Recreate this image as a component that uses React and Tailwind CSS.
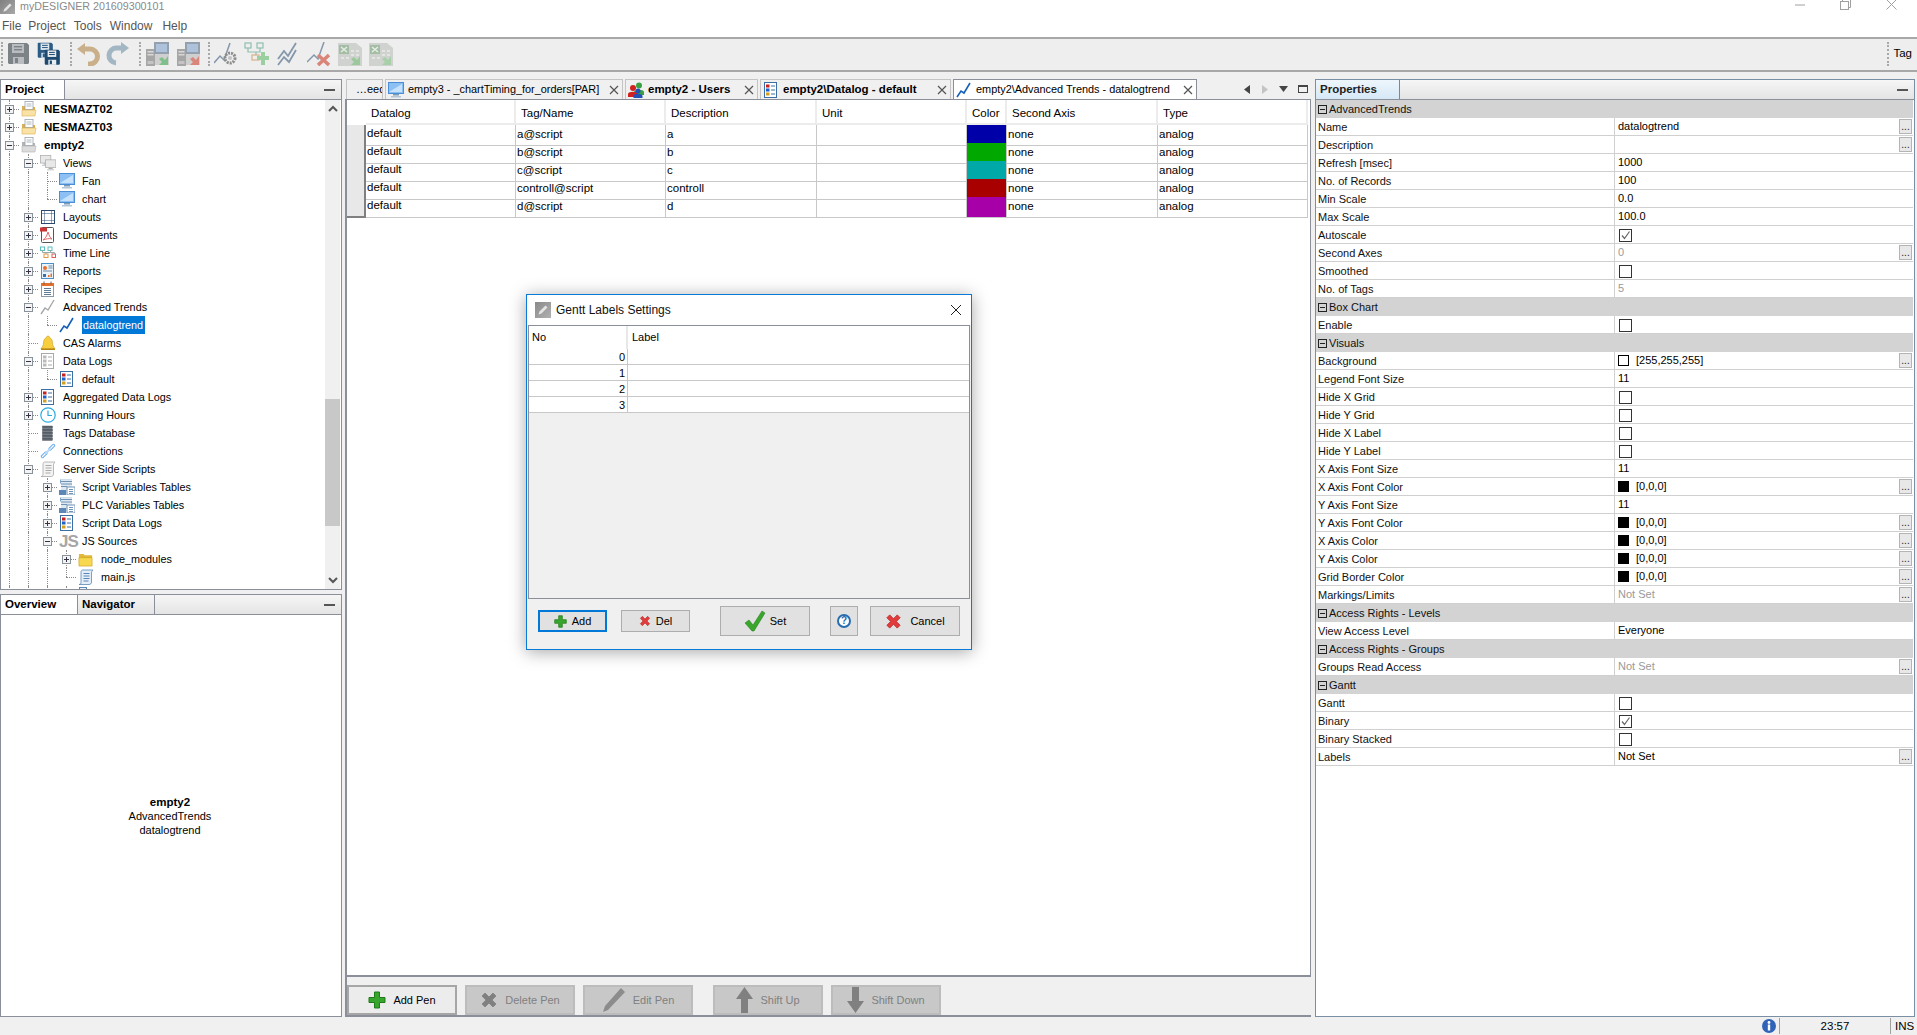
import React from "react";

const F = "font-['Liberation_Sans','Arial',sans-serif]";

/* ---------- toolbar icons ---------- */
const Floppy = ({ c = "#7d8287", l = "#b9bcc0", x = 0, y = 0, s = 1 }) => (
  <g transform={`translate(${x} ${y}) scale(${s})`}>
    <path d="M2 1h18l2 2v18l-1 1H2l-1-1V2z" fill={c} />
    <rect x="5" y="2" width="12" height="9" fill={l} />
    <rect x="7" y="4" width="8" height="1.4" fill={c} />
    <rect x="7" y="7" width="8" height="1.4" fill={c} />
    <rect x="6" y="15" width="11" height="7" fill={l} />
    <rect x="8" y="16" width="3" height="5" fill={c} />
  </g>
);
const IconSave = () => (
  <svg width="24" height="24" viewBox="0 0 24 24"><Floppy /></svg>
);
const IconSaveAll = () => (
  <svg width="24" height="24" viewBox="0 0 24 24">
    <Floppy c="#2b5c86" l="#dfe6ec" s={0.72} x={0} y={0} />
    <Floppy c="#1e4a70" l="#e8edf1" s={0.72} x={7} y={7} />
  </svg>
);
const IconUndo = () => (
  <svg width="24" height="24" viewBox="0 0 24 24">
    <path d="M7 7h7a6.5 6.5 0 0 1 0 15h-2" fill="none" stroke="#c9b08a" strokeWidth="5" />
    <path d="M9 1v12L1 7z" fill="#c9b08a" />
  </svg>
);
const IconRedo = () => (
  <svg width="24" height="24" viewBox="0 0 24 24">
    <path d="M17 6h-6a6.5 6.5 0 0 0-1 15" fill="none" stroke="#a3b6c4" strokeWidth="5" />
    <path d="M15 0v12l8-6z" fill="#a3b6c4" />
  </svg>
);
const IconServer = ({ arrow = "#7fc08a" }) => (
  <svg width="24" height="24" viewBox="0 0 24 24">
    <rect x="0" y="7" width="9" height="17" fill="#a6a6a6" />
    <rect x="1.5" y="9" width="6" height="1.5" fill="#d8d8d8" />
    <rect x="1.5" y="12" width="6" height="1.5" fill="#d8d8d8" />
    <rect x="1.5" y="19" width="6" height="3" fill="#c4c4c4" />
    <rect x="8" y="0" width="15" height="12" fill="#93a0ae" />
    <rect x="10" y="2" width="11" height="8" fill="#aec2dc" />
    <rect x="9" y="12" width="14" height="11" fill="#cfcfcf" />
    <path d="M22 14v9H13l3-3-3-3 3-2 3 3z" fill={arrow} />
  </svg>
);
const IconTrendGear = () => (
  <svg width="24" height="24" viewBox="0 0 24 24">
    <path d="M0 21l6-7 4 4 6-17" fill="none" stroke="#8497ab" strokeWidth="1.5" />
    <circle cx="16" cy="16" r="5" fill="none" stroke="#8c8c8c" strokeWidth="3" strokeDasharray="2 1" />
    <circle cx="16" cy="16" r="2" fill="#c2c2c2" />
  </svg>
);
const IconTreePlus = () => (
  <svg width="25" height="24" viewBox="0 0 25 24">
    <g fill="none" stroke="#8fbfb0" strokeWidth="1.2">
      <rect x="1" y="1" width="6" height="5" />
      <rect x="13" y="1" width="6" height="5" />
      <path d="M4 6v4h8M16 6v4h-4v3" />
    </g>
    <rect x="8" y="13" width="7" height="5" fill="none" stroke="#d6b18a" strokeWidth="1.2" />
    <path d="M17 10h4v4h4v4h-4v5h-4v-5h-4v-4h4z" fill="#9ccf9f" />
  </svg>
);
const IconTrends = () => (
  <svg width="24" height="24" viewBox="0 0 24 24" fill="none" stroke="#8497ab" strokeWidth="1.8">
    <path d="M2 17l6-8 4 5 8-13" />
    <path d="M2 23l6-8 5 5 7-12" />
  </svg>
);
const IconTrendX = () => (
  <svg width="24" height="24" viewBox="0 0 24 24">
    <path d="M0 20l7-7 4 4 6-17" fill="none" stroke="#8497ab" strokeWidth="1.5" />
    <path d="M11 13l11 10M22 13L11 23" stroke="#d9857a" strokeWidth="3.6" />
  </svg>
);
const IconExcel = ({ a = "#9cc99c" }) => (
  <svg width="24" height="24" viewBox="0 0 24 24">
    <path d="M0 1h18l6 5v18H0z" fill="#cfd2cf" />
    <rect x="1" y="3" width="10" height="9" fill="#a5bca5" />
    <path d="M3 5l6 5M9 5l-6 5" stroke="#e6efe6" strokeWidth="1.4" />
    <g fill="#e3e5e3">
      <rect x="13" y="8" width="3" height="2" /><rect x="18" y="8" width="3" height="2" />
      <rect x="13" y="12" width="3" height="2" /><rect x="18" y="12" width="3" height="2" />
      <rect x="3" y="15" width="3" height="2" /><rect x="8" y="15" width="3" height="2" />
    </g>
    <path d="M22 14v9h-9l3-3-3-3 3-2 3 3z" fill={a} />
  </svg>
);
const Grip = () => (
  <div className="w-[2px] h-[24px] border-l-2 border-dotted border-[#a8a8a8]" />
);

/* ---------- tree icons (16 box) ---------- */
const I = ({ children, w = 16, h = 16 }) => (
  <svg width={w} height={h} viewBox="0 0 16 16">{children}</svg>
);
const FolderDoc = ({ gray }) => {
  const a = gray ? "#dcdcdc" : "#f8e2a6";
  const b = gray ? "#b4b4b4" : "#dcb050";
  return (
    <I>
      <path d="M1 5h4l1 1h8v9H1z" fill={b} />
      <rect x="4" y="0.5" width="8" height="8" fill="#fff" stroke="#9aa4ae" strokeWidth="0.8" />
      <path d="M5.5 3h5M5.5 5h5" stroke="#9aa4ae" strokeWidth="0.8" />
      <path d="M1 9h14l-1 6H1z" fill={a} stroke={b} strokeWidth="0.6" />
    </I>
  );
};
const Mon = ({ x = 0, y = 0, s = 1, gray }) => (
  <g transform={`translate(${x} ${y}) scale(${s})`}>
    <rect x="0.5" y="0.5" width="15" height="11" fill={gray ? "#e8e8e8" : "#8cc0f4"} stroke={gray ? "#a8a8a8" : "#4a8fd6"} />
    {!gray && <path d="M1 10l13-8v8z" fill="#c6e1fb" />}
    <rect x="5" y="12" width="6" height="1.5" fill={gray ? "#a8a8a8" : "#7d9ab5"} />
    <rect x="3" y="14" width="10" height="1.5" fill={gray ? "#c4c4c4" : "#b4c6d6"} />
  </g>
);
const Monitors = () => (
  <I>
    <Mon gray s={0.7} x={0} y={0} />
    <Mon gray s={0.7} x={5} y={4.5} />
  </I>
);
const Layouts = () => (
  <I>
    <rect x="1.5" y="1.5" width="13" height="13" fill="#fff" stroke="#2c4a6e" />
    <path d="M1.5 4.5h13M1.5 11.5h13M4.5 1.5v13M11.5 1.5v13" stroke="#2c4a6e" strokeDasharray="1 1" fill="none" />
  </I>
);
const Pdf = () => (
  <I>
    <rect x="1.5" y="0.5" width="12" height="15" rx="1" fill="#fff" stroke="#555" />
    <rect x="0" y="0.5" width="7" height="4" fill="#c33" />
    <path d="M8 5c-1 4-3 7-5 8 3-1 6-2 9-1-2-1-3-4-4-7z" fill="none" stroke="#e26a6a" />
  </I>
);
const TimeLine = () => (
  <I>
    <g fill="none" strokeWidth="1">
      <rect x="0.5" y="2" width="4" height="3.5" stroke="#5cc0c0" />
      <rect x="8" y="2" width="4" height="3.5" stroke="#5cc0c0" />
      <rect x="4" y="9" width="4" height="3.5" stroke="#e59a4a" />
      <rect x="12" y="9" width="3.5" height="3.5" stroke="#e05a5a" />
      <path d="M2.5 5.5v2h8v-2M6 7.5v1.5M10.500 7.500h4v1.500" stroke="#9aa" />
    </g>
  </I>
);
const Reports = () => (
  <I>
    <rect x="1.500" y="0.500" width="12" height="15" fill="#e8f3fb" stroke="#4a90c8" />
    <circle cx="5" cy="5" r="2" fill="#e8702a" />
    <path d="M8.500 3h4M8.500 5h4M3 8h9" stroke="#6a8aa5" />
    <rect x="3" y="11" width="3" height="3" fill="#3a6fb0" />
    <path d="M8 14v-2h1.500v2zM10.500 14v-3.500H12V14z" fill="#e8702a" />
  </I>
);
const Recipes = () => (
  <I>
    <rect x="1.500" y="2.500" width="12" height="13" fill="#fff" stroke="#8a9aa8" />
    <rect x="1" y="2" width="13" height="3" fill="#e8702a" />
    <path d="M4 0.500v3M11 0.500v3" stroke="#666" />
    <path d="M4 7.500h7M4 9.500h7M4 11.500h7M4 13.500h7" stroke="#5f7a94" />
  </I>
);
const TrendGray = () => (
  <I><path d="M1 15l4-6 3 2 6-10" fill="none" stroke="#a8a8a8" strokeWidth="1.4" /></I>
);
const TrendBlue = () => (
  <I><path d="M1 15l4-6 3 2 6-10" fill="none" stroke="#1560bd" strokeWidth="1.6" /></I>
);
const Bell = () => (
  <I>
    <path d="M8 1a1.500 1.500 0 0 1 1.500 1.500C12 3.500 12.500 6 12.500 8c0 2 1 4 2.500 5.500H1C2.500 12 3.500 10 3.500 8c0-2 .5-4.500 3-5.500A1.500 1.500 0 0 1 8 1z" fill="#f7cf3e" stroke="#c99a1e" strokeWidth="0.6" />
    <rect x="1" y="13.500" width="14" height="1.500" fill="#b8860b" />
  </I>
);
const ListIcon = ({ gray }) => {
  const s = gray ? "#a8a8a8" : "#3b6ea5";
  const cs = gray ? ["#bbb", "#bbb", "#bbb"] : ["#c82020", "#2060c8", "#d0a020"];
  return (
    <I>
      <rect x="1.500" y="0.500" width="12" height="15" fill="#fff" stroke={s} />
      {cs.map((c, i) => (
        <g key={i}>
          <rect x="3" y={2.5 + i * 4} width="3.500" height="3" fill={c} />
          <path d={`M8 ${4 + i * 4}h4`} stroke={s} />
        </g>
      ))}
    </I>
  );
};
const Clock = () => (
  <I>
    <circle cx="8" cy="8" r="7.200" fill="#fff" stroke="#29abe2" strokeWidth="1.200" />
    <path d="M8 3.500V8.500h4" fill="none" stroke="#29abe2" strokeWidth="1.200" />
  </I>
);
const Db = () => (
  <I>
    {[1, 4, 7, 10, 13].map((y) => (
      <rect key={y} x="2.500" y={y} width="10" height="2.400" fill="#5c6670" stroke="#3c444c" strokeWidth="0.4" />
    ))}
  </I>
);
const LinkI = () => (
  <I>
    <g fill="none" strokeLinecap="round">
      <path d="M2.500 13.500l3.500-3.500" stroke="#6fb2f0" strokeWidth="3.400" />
      <path d="M10 6l3.500-3.500" stroke="#6fb2f0" strokeWidth="3.400" />
      <path d="M2.500 13.500l3.500-3.500M10 6l3.500-3.500" stroke="#fff" strokeWidth="1.200" />
      <path d="M6 10l4-4" stroke="#b8daf8" strokeWidth="2" />
    </g>
  </I>
);
const Script = ({ blue }) => {
  const s = blue ? "#5b86b5" : "#a8a8a8";
  return (
    <I>
      <path d="M4.500 1H15c-1 1-1.500 2-1.500 3v9c0 1.500-1 2.500-2.500 2.500H1c1.500 0 2-1 2-2V3c0-1 .5-2 1.500-2z" fill={blue ? "#e4eef8" : "#f4f4f4"} stroke={s} strokeWidth="0.800" />
      <path d="M5.500 4.500h6M5.500 7h6M5.500 9.500h6M5.500 12h5" stroke={s} />
    </I>
  );
};
const Table = () => (
  <I>
    <rect x="1" y="0.500" width="12" height="4" fill="#7ea4c8" />
    <path d="M2 0.500h11v14H2z" fill="#dfe8f1" />
    <path d="M2 2.500h11M2 5h11M2 7.500h6" stroke="#6f93b6" />
    <rect x="0" y="11" width="7" height="5" fill="#5b86b5" />
    <rect x="8" y="8" width="8" height="8" fill="#fff" stroke="#6f93b6" />
    <path d="M10 10.500h4M10 12.500h4M10 14.500h4" stroke="#6f93b6" />
  </I>
);
const Folder = () => (
  <I w={15} h={15}>
    <path d="M1 2h5l1 1.500h8V15H1z" fill="#e2b93b" />
    <path d="M1 6h14v9H1z" fill="#f7d84e" stroke="#c99a1e" strokeWidth="0.600" />
  </I>
);
const Js = () => (
  <span className="text-[17px] font-bold leading-none tracking-[-1px] text-[#a6a6a6]">JS</span>
);
const MonitorI = () => <I><Mon /></I>;
const PageTop = () => (
  <I><rect x="1.500" y="0.500" width="7" height="15" fill="#eaf2fa" stroke="#5b86b5" /></I>
);

/* ---------- tree ---------- */
const Exp = ({ k }) => (
  <span className="absolute left-[5px] top-[5px] w-[9px] h-[9px] border border-[#8a9299] bg-[#f4f4f4] flex items-center justify-center z-10">
    <span className="relative block w-[5px] h-px bg-[#334]">
      {k === "p" && <span className="absolute left-[2px] top-[-2px] w-px h-[5px] bg-[#334]" />}
    </span>
  </span>
);

const tree = [
  [0, "p", <FolderDoc />, "NESMAZT02", { b: 1 }],
  [0, "p", <FolderDoc />, "NESMAZT03", { b: 1 }],
  [0, "m", <FolderDoc gray />, "empty2", { b: 1 }],
  [1, "m", <Monitors />, "Views"],
  [2, "", <MonitorI />, "Fan"],
  [2, "", <MonitorI />, "chart", { last: 1 }],
  [1, "p", <Layouts />, "Layouts"],
  [1, "p", <Pdf />, "Documents"],
  [1, "p", <TimeLine />, "Time Line"],
  [1, "p", <Reports />, "Reports"],
  [1, "p", <Recipes />, "Recipes"],
  [1, "m", <TrendGray />, "Advanced Trends"],
  [2, "", <TrendBlue />, "datalogtrend", { last: 1, sel: 1 }],
  [1, "", <Bell />, "CAS Alarms"],
  [1, "m", <ListIcon gray />, "Data Logs"],
  [2, "", <ListIcon />, "default", { last: 1 }],
  [1, "p", <ListIcon />, "Aggregated Data Logs"],
  [1, "p", <Clock />, "Running Hours"],
  [1, "", <Db />, "Tags Database"],
  [1, "", <LinkI />, "Connections"],
  [1, "m", <Script />, "Server Side Scripts"],
  [2, "p", <Table />, "Script Variables Tables"],
  [2, "p", <Table />, "PLC Variables Tables"],
  [2, "p", <ListIcon />, "Script Data Logs"],
  [2, "m", <Js />, "JS Sources"],
  [3, "p", <Folder />, "node_modules"],
  [3, "", <Script blue />, "main.js", { last: 1 }],
  [3, "", <PageTop />, ""],
];

const V = ({ half }) => (
  <span className={`absolute left-[9px] top-0 w-0 border-l border-dotted border-[#8a8a8a] ${half ? "h-[9px]" : "h-full"}`} />
);

const TreeRow = ({ r }) => {
  const [lv, ex, ic, label, o = {}] = r;
  return (
    <div className="flex h-[18px] items-stretch">
      {Array.from({ length: lv }).map((_, i) => (
        <div key={i} className="relative w-[19px] shrink-0"><V /></div>
      ))}
      <div className="relative w-[19px] shrink-0">
        <V half={o.last} />
        <span className="absolute left-[9px] top-[9px] w-[10px] h-0 border-t border-dotted border-[#8a8a8a]" />
        {ex && <Exp k={ex} />}
      </div>
      <div className="w-[24px] shrink-0 pl-[2px] flex items-center">{ic}</div>
      <div
        className={`pl-px pr-[2px] flex items-center whitespace-nowrap ${o.b ? "font-bold text-[11.5px] pt-px" : "text-[10.8px]"} ${
          o.sel ? "ml-px bg-[#0078d7] text-white" : "text-black"
        }`}
      >
        {label}
      </div>
    </div>
  );
};

const Dash = () => <div className="w-[11px] h-[2px] bg-[#555]" />;
const headGrad = "bg-gradient-to-b from-[#f6f6f6] to-[#e4e4e4]";

const Chevron = ({ up }) => (
  <svg width="10" height="8" viewBox="0 0 10 8">
    <path d={up ? "M1 6l4-4 4 4" : "M1 2l4 4 4-4"} fill="none" stroke="#555" strokeWidth="2" />
  </svg>
);

/* ---------- center ---------- */
const X = () => (
  <svg width="10" height="10" viewBox="0 0 10 10"><path d="M1 1l8 8M9 1L1 9" stroke="#555" strokeWidth="1.200" /></svg>
);
const Users = () => (
  <I>
    <circle cx="11" cy="3.500" r="3" fill="#3aa040" />
    <path d="M6 10c0-3 10-3 10 0v3H6z" fill="#3aa040" />
    <circle cx="5" cy="6" r="3" fill="#d02020" />
    <path d="M0 12c0-3 10-3 10 0v3H0z" fill="#d02020" />
    <circle cx="10" cy="9" r="2.500" fill="#2050b8" />
    <path d="M5.500 14c0-3 9-3 9 0v2h-9z" fill="#2050b8" />
  </I>
);

const Tab = ({ w, icon, label, bold, active }) => (
  <div
    className={`shrink-0 h-[20px] flex items-center whitespace-nowrap border-x border-t ${
      active ? "bg-white border-[#8a8f99]" : "bg-[#f0f0f0] border-[#c4c4c4]"
    } ${w}`}
  >
    <div className="w-[22px] pl-[2px] shrink-0 flex items-center">{icon}</div>
    <div className={`flex-1 overflow-hidden ${bold ? "font-bold text-[11.5px]" : "text-[10.9px]"}`}>{label}</div>
    <div className="w-[13px] shrink-0 flex items-center"><X /></div>
  </div>
);

const headers = ["Datalog", "Tag/Name", "Description", "Unit", "Color", "Second Axis", "Type"];
const pens = [
  ["a@script", "a", "#0000a8"],
  ["b@script", "b", "#00a800"],
  ["c@script", "c", "#00a8a8"],
  ["controll@script", "controll", "#a80000"],
  ["d@script", "d", "#a800a8"],
];
const cols = "grid grid-cols-[19px_150px_150px_151px_150px_40px_151px_150px]";

const PenBtn = ({ w = "w-[110px]", icon, label, off, cls = "" }) => (
  <div
    className={`${w} h-[30px] shrink-0 flex items-center justify-center gap-[7px] text-[11px] border-2 ${
      off ? "bg-[#c8c8c8] border-[#bcbcbc] text-[#808080]" : "bg-[#ececec] border-[#a6a6a6] text-black"
    } ${cls}`}
  >
    {icon}
    <span>{label}</span>
  </div>
);
const Plus = ({ s = 18, c = "#36a62c", d = "#1f7a18" }) => (
  <svg width={s} height={s} viewBox="0 0 18 18">
    <path d="M6.500 1h5v5.500H17v5h-5.500V17h-5v-5.500H1v-5h5.500z" fill={c} stroke={d} />
  </svg>
);
const BigX = ({ s = 17, c = "#e23b3b", d = "#b52020" }) => (
  <svg width={s} height={s} viewBox="0 0 18 18">
    <path d="M2 5l3-3 4 4 4-4 3 3-4 4 4 4-3 3-4-4-4 4-3-3 4-4z" fill={c} stroke={d} strokeWidth="0.800" />
  </svg>
);

/* ---------- properties ---------- */
const Box = ({ checked }) => (
  <div className="ml-[4px] mt-px w-[13px] h-[13px] border border-[#333] bg-white flex items-center justify-center">
    {checked ? (
      <svg width="11" height="11" viewBox="0 0 11 11">
        <path d="M2 5.500l2.500 3L9.500 1.500" fill="none" stroke="#666" strokeWidth="1.200" />
      </svg>
    ) : null}
  </div>
);
const Swatch = ({ c, v }) => (
  <div className="flex items-center pl-[3px]">
    <span className={`w-[11px] h-[11px] border border-black ${c}`} />
    <span className="ml-[7px] text-[11px]">{v}</span>
  </div>
);
const props = [
  { g: "AdvancedTrends" },
  { l: "Name", v: "datalogtrend", e: 1 },
  { l: "Description", v: "", e: 1 },
  { l: "Refresh [msec]", v: "1000" },
  { l: "No. of Records", v: "100" },
  { l: "Min Scale", v: "0.0" },
  { l: "Max Scale", v: "100.0" },
  { l: "Autoscale", c: 1 },
  { l: "Second Axes", v: "0", d: 1, e: 1 },
  { l: "Smoothed", c: 0 },
  { l: "No. of Tags", v: "5", d: 1 },
  { g: "Box Chart" },
  { l: "Enable", c: 0 },
  { g: "Visuals" },
  { l: "Background", s: "bg-white", sv: "[255,255,255]", e: 1 },
  { l: "Legend Font Size", v: "11" },
  { l: "Hide X Grid", c: 0 },
  { l: "Hide Y Grid", c: 0 },
  { l: "Hide X Label", c: 0 },
  { l: "Hide Y Label", c: 0 },
  { l: "X Axis Font Size", v: "11" },
  { l: "X Axis Font Color", s: "bg-black", sv: "[0,0,0]", e: 1 },
  { l: "Y Axis Font Size", v: "11" },
  { l: "Y Axis Font Color", s: "bg-black", sv: "[0,0,0]", e: 1 },
  { l: "X Axis Color", s: "bg-black", sv: "[0,0,0]", e: 1 },
  { l: "Y Axis Color", s: "bg-black", sv: "[0,0,0]", e: 1 },
  { l: "Grid Border Color", s: "bg-black", sv: "[0,0,0]", e: 1 },
  { l: "Markings/Limits", v: "Not Set", d: 1, e: 1 },
  { g: "Access Rights - Levels" },
  { l: "View Access Level", v: "Everyone" },
  { g: "Access Rights - Groups" },
  { l: "Groups Read Access", v: "Not Set", d: 1, e: 1 },
  { g: "Gantt" },
  { l: "Gantt", c: 0 },
  { l: "Binary", c: 1 },
  { l: "Binary Stacked", c: 0 },
  { l: "Labels", v: "Not Set", e: 1 },
];

const PropRow = ({ p }) => {
  if (p.g)
    return (
      <div className="h-[18px] bg-[#d3d3d3] flex items-center pl-[2px] text-[11px] text-[#111]">
        <span className="w-[9px] h-[9px] border border-[#222] flex items-center justify-center mr-[2px]">
          <span className="w-[5px] h-px bg-[#222]" />
        </span>
        {p.g}
      </div>
    );
  return (
    <div className="h-[18px] flex border-b border-[#d0d0d0] text-[11px] text-[#111]">
      <div className="w-[299px] shrink-0 pl-[2px] pt-[2px] flex items-center border-r border-[#d0d0d0]">{p.l}</div>
      <div className={`flex-1 flex items-center justify-between ${p.d ? "text-[#999]" : "text-black"}`}>
        {p.c !== undefined ? (
          <Box checked={p.c} />
        ) : p.s ? (
          <Swatch c={p.s} v={p.sv} />
        ) : (
          <span className="pl-[3px] pb-px">{p.v}</span>
        )}
        {p.e ? (
          <span className="w-[13px] h-[15px] mr-px bg-[#e8e8e8] border border-[#b4b4b4] flex items-end justify-center text-[10px] leading-[12px] text-[#222]">
            ...
          </span>
        ) : null}
      </div>
    </div>
  );
};

/* ---------- dialog ---------- */
const Dlg = ({ w, h, icon, label, gap = "gap-[5px]", focus }) => (
  <div
    className={`${w} ${h} shrink-0 flex items-center justify-center ${gap} bg-[#e1e1e1] text-[11px] text-black ${
      focus ? "border-2 border-[#0078d7]" : "border border-[#adadad]"
    }`}
  >
    {icon}
    {label && <span>{label}</span>}
  </div>
);

const Dialog = () => (
  <div className="absolute left-[526px] top-[294px] w-[446px] h-[356px] flex flex-col border border-[#0a7ad6] bg-[#f0f0f0] shadow-[0_2px_16px_rgba(0,0,0,0.35)]">
    <div className="h-[30px] bg-white flex items-center pl-[8px] pr-[9px] shrink-0">
      <div className="w-[16px] h-[16px] bg-gradient-to-br from-[#8a8a8a] to-[#b0b0b0] flex items-center justify-center">
        <svg width="12" height="12" viewBox="0 0 12 12"><path d="M1.500 10.500l1-3 6-6 2 2-6 6z" fill="#e4e4e4" /></svg>
      </div>
      <span className="ml-[5px] pb-px text-[12px] text-[#111]">Gentt Labels Settings</span>
      <svg className="ml-auto" width="12" height="12" viewBox="0 0 12 12"><path d="M1 1l10 10M11 1L1 11" stroke="#222" strokeWidth="1" /></svg>
    </div>
    <div className="mx-px h-[274px] border border-[#8a8f99] bg-[#f0f0f0] flex flex-col">
      <div className="h-[23px] bg-white flex text-[11px]">
        <div className="w-[99px] pl-[3px] flex items-center border-r-2 border-[#e8e8e8]">No</div>
        <div className="flex-1 pl-[4px] flex items-center">Label</div>
      </div>
      {[0, 1, 2, 3].map((n) => (
        <div key={n} className="h-[16px] bg-white flex text-[11px] border-b border-[#c8c8c8]">
          <div className="w-[99px] pr-[2px] pt-[2px] flex items-center justify-end border-r border-[#c8c8c8]">{n}</div>
          <div className="flex-1" />
        </div>
      ))}
    </div>
    <div className="flex-1 flex items-center pl-[11px] pb-[6px]">
      <Dlg focus w="w-[69px]" h="h-[22px]" icon={<Plus s={13} />} label="Add" />
      <Dlg w="w-[69px] ml-[14px]" h="h-[22px]" icon={<BigX s={12} />} label="Del" />
      <Dlg
        w="w-[90px] ml-[30px]"
        h="h-[30px]"
        icon={
          <svg width="22" height="22" viewBox="0 0 22 22">
            <path d="M1 13l4-3 4 5L18 1l3 2-11 18h-2z" fill="#3aa62c" stroke="#2a8420" strokeWidth="0.600" />
          </svg>
        }
        label="Set"
        gap="gap-[4px]"
      />
      <Dlg
        w="w-[28px] ml-[20px]"
        h="h-[30px]"
        icon={
          <span className="w-[14px] h-[14px] rounded-full border-2 border-[#2a6cb0] bg-white text-[#2a6cb0] font-bold text-[10px] leading-[10px] text-center">?</span>
        }
      />
      <Dlg w="w-[90px] ml-[12px]" h="h-[30px]" icon={<BigX />} label="Cancel" gap="gap-[8px]" />
    </div>
  </div>
);

const menu = [
  ["File", "-mr-px"],
  ["Project", ""],
  ["Tools", ""],
  ["Window", "mr-px"],
  ["Help", "ml-px"],
];

/* ---------- app ---------- */
export default function App() {
  return (
    <div className={`${F} relative w-[1917px] h-[1035px] overflow-hidden flex flex-col bg-[#f0f0f0] text-black`}>
      {/* title */}
      <div className="h-[16px] shrink-0 bg-white flex items-start overflow-hidden">
        <div className="w-[15px] h-[14px] bg-gradient-to-br from-[#808080] to-[#a8a8a8] flex items-center justify-center">
          <svg width="11" height="11" viewBox="0 0 12 12"><path d="M1.500 10.500l1-3 6-6 2 2-6 6z" fill="#e4e4e4" /></svg>
        </div>
        <span className="ml-[5px] text-[10.7px] leading-[13px] text-[#8a8a8a]">myDESIGNER 201609300101</span>
        <div className="ml-auto flex items-start mr-[20px]">
          <svg width="10" height="10" viewBox="0 0 10 10"><path d="M0 5h10" stroke="#a0a0a0" /></svg>
          <svg className="ml-[35px] mt-[-1px]" width="11" height="11" viewBox="0 0 11 11" fill="none" stroke="#a0a0a0">
            <rect x="0.500" y="2.500" width="8" height="8" /><path d="M2.500 2.500v-2h8v8h-2" />
          </svg>
          <svg className="ml-[35px] mt-[-1px]" width="11" height="11" viewBox="0 0 11 11"><path d="M0.500 0.500l10 10M10.500 0.500l-10 10" stroke="#a0a0a0" /></svg>
        </div>
      </div>
      {/* menu */}
      <div className="h-[21px] shrink-0 bg-white flex items-center pl-[2px] gap-[8px] text-[12px] text-[#555] pb-[2px]">
        {menu.map(([m, c]) => <span key={m} className={c}>{m}</span>)}
      </div>
      {/* toolbar */}
      <div className="h-[35px] shrink-0 flex items-center bg-[#eeeeee] border-y-2 border-[#a8a8a8] pb-[2px]">
        <div className="ml-px"><Grip /></div>
        <div className="ml-px flex">
          <div className="w-[30px] flex justify-center"><IconSave /></div>
          <div className="w-[30px] flex justify-center"><IconSaveAll /></div>
        </div>
        <div className="ml-[6px]"><Grip /></div>
        <div className="ml-px flex">
          <div className="w-[30px] flex justify-center"><IconUndo /></div>
          <div className="w-[30px] flex justify-center"><IconRedo /></div>
        </div>
        <div className="ml-[6px]"><Grip /></div>
        <div className="ml-px flex">
          <div className="w-[31px] flex justify-center"><IconServer /></div>
          <div className="w-[31px] flex justify-center"><IconServer arrow="#d9857a" /></div>
        </div>
        <div className="ml-[4px]"><Grip /></div>
        <div className="ml-px flex">
          <div className="w-[30px] flex justify-center"><IconTrendGear /></div>
          <div className="w-[31px] flex justify-center"><IconTreePlus /></div>
          <div className="w-[31px] flex justify-center"><IconTrends /></div>
          <div className="w-[31px] flex justify-center"><IconTrendX /></div>
          <div className="w-[31px] flex justify-center"><IconExcel /></div>
          <div className="w-[31px] flex justify-center"><IconExcel a="#a8d0a8" /></div>
        </div>
        <div className="ml-auto flex items-center mr-[5px] gap-[4px]">
          <Grip />
          <span className="text-[11.5px]">Tag</span>
        </div>
      </div>

      {/* main */}
      <div className="flex-1 min-h-0 flex pt-[7px]">
        {/* left */}
        <div className="w-[342px] shrink-0 flex flex-col gap-[4px]">
          <div className="h-[511px] shrink-0 flex flex-col border border-[#8a8f99] bg-white">
            <div className={`h-[20px] shrink-0 flex border-b border-[#8a8f99] ${headGrad}`}>
              <div className="w-[64px] bg-white border-r border-[#8a8f99] pl-[4px] pt-px flex items-center font-bold text-[11.500px]">Project</div>
              <div className="flex-1 flex items-center justify-end pr-[6px]"><Dash /></div>
            </div>
            <div className="flex-1 min-h-0 flex">
              <div className="flex-1 min-w-0 -ml-px overflow-hidden">
                {tree.map((r, i) => <TreeRow key={i} r={r} />)}
              </div>
              <div className="w-[15px] shrink-0 mr-px bg-[#f0f0f0] flex flex-col items-center">
                <div className="h-[18px] flex items-center"><Chevron up /></div>
                <div className="h-[281px] shrink-0" />
                <div className="w-full h-[127px] bg-[#c8c8c8]" />
                <div className="flex-1" />
                <div className="h-[18px] flex items-center"><Chevron /></div>
              </div>
            </div>
          </div>
          <div className="flex-1 min-h-0 flex flex-col border border-[#8a8f99] bg-white">
            <div className={`h-[20px] shrink-0 flex border-b border-[#8a8f99] ${headGrad} font-bold text-[11.500px]`}>
              <div className="w-[77px] bg-white border-r border-[#8a8f99] pl-[4px] pt-px flex items-center">Overview</div>
              <div className="w-[77px] border-r border-[#8a8f99] pl-[4px] pt-px flex items-center">Navigator</div>
              <div className="flex-1 flex items-center justify-end pr-[6px]"><Dash /></div>
            </div>
            <div className="flex-1 flex flex-col items-center justify-center pr-[2px] text-[11px] leading-[14px]">
              <span className="font-bold text-[11.500px]">empty2</span>
              <span>AdvancedTrends</span>
              <span>datalogtrend</span>
            </div>
          </div>
        </div>

        {/* center */}
        <div className="w-[966px] shrink-0 ml-[3px] flex flex-col">
          <div className="h-[20px] shrink-0 flex items-end pl-px gap-[2px]">
            <div className="w-[37px] h-[20px] shrink-0 bg-[#f0f0f0] border-x border-t border-[#c4c4c4] pl-[9px] text-[11px] flex items-center overflow-hidden whitespace-nowrap">…eed</div>
            <Tab w="w-[238px]" icon={<I><Mon /></I>} label="empty3 - _chartTiming_for_orders[PAR]" />
            <Tab w="w-[133px]" icon={<Users />} label="empty2 - Users" bold />
            <Tab w="w-[191px]" icon={<ListIcon />} label="empty2\Datalog - default" bold />
            <Tab w="w-[244px]" icon={<TrendBlue />} label="empty2\Advanced Trends - datalogtrend" active />
            <div className="flex-1 h-full flex items-center justify-end pr-[3px] gap-[8px]">
              <svg width="9" height="11" viewBox="0 0 9 11"><path d="M7 1v9L1 5.500z" fill="#444" /></svg>
              <svg width="9" height="11" viewBox="0 0 9 11"><path d="M2 1v9l6-4.500z" fill="#c4c4c4" /></svg>
              <svg width="11" height="9" viewBox="0 0 11 9" className="ml-[1px]"><path d="M1 1h9L5.500 7z" fill="#444" /></svg>
              <span className="w-[10px] h-[8px] border border-[#444] border-t-2 ml-[1px]" />
            </div>
          </div>
          <div className="h-[878px] shrink-0 border-2 border-t border-[#8a8f99] border-r-[1px] bg-white">
            <div className={`${cols} h-[25px] text-[11.500px]`}>
              <div className="bg-white" />
              {headers.map((h) => (
                <div key={h} className="pl-[5px] pt-[5px] flex items-center border-r-2 border-b-2 border-[#ececec]">{h}</div>
              ))}
            </div>
            {pens.map((p) => (
              <div key={p[0]} className={`${cols} h-[18px] text-[11.500px]`}>
                <div className="bg-[#e8e8e8] border-r-2 border-b-2 border-[#808080]" />
                <div className="pl-px pb-[3px] flex items-center border-b border-r border-[#c8c8c8]">default</div>
                <div className="pl-px pb-px flex items-center border-b border-r border-[#c8c8c8]">{p[0]}</div>
                <div className="pl-px pb-[2px] flex items-center border-b border-r border-[#c8c8c8]">{p[1]}</div>
                <div className="border-b border-r border-[#c8c8c8]" />
                <div className="border-b border-r border-[#c8c8c8]" style={{ backgroundColor: p[2] }} />
                <div className="pl-px pb-[2px] flex items-center border-b border-r border-[#c8c8c8]">none</div>
                <div className="pl-px pb-[2px] flex items-center border-b border-r border-[#c8c8c8]">analog</div>
              </div>
            ))}
          </div>
          <div className="flex-1 flex items-start pt-[8px] border-b-2 border-l-2 border-[#8a8f99]">
            <PenBtn icon={<Plus s={18} />} label="Add Pen" />
            <PenBtn cls="ml-[8px]" icon={<BigX s={18} c="#808080" d="#808080" />} label="Delete Pen" off />
            <PenBtn
              cls="ml-[8px]"
              icon={<svg width="24" height="26" viewBox="0 0 24 26"><path d="M1 25l2-6L19 1l4 4L6 23z" fill="#8c8c8c" /></svg>}
              label="Edit Pen"
              off
            />
            <PenBtn
              cls="ml-[20px]"
              icon={<svg width="17" height="26" viewBox="0 0 17 26"><path d="M8.500 0L17 12h-5v14H5V12H0z" fill="#808080" /></svg>}
              label="Shift Up"
              off
            />
            <PenBtn
              cls="ml-[8px]"
              icon={<svg width="17" height="26" viewBox="0 0 17 26"><path d="M8.500 26L17 14h-5V0H5v14H0z" fill="#808080" /></svg>}
              label="Shift Down"
              off
            />
          </div>
        </div>

        {/* right */}
        <div className="w-[600px] shrink-0 ml-[4px] flex flex-col border border-[#7a8fa3] bg-white">
          <div className={`h-[20px] shrink-0 flex border-b border-[#8a8f99] ${headGrad}`}>
            <div className="w-[84px] pl-[4px] pt-px flex items-center font-bold text-[11.500px] text-[#222] border-r border-[#5a90c0] bg-gradient-to-b from-[#eef6fc] to-[#d6e8f6]">Properties</div>
            <div className="flex-1 flex items-center justify-end pr-[6px]"><Dash /></div>
          </div>
          <div className="pr-[1px]">
            {props.map((p, i) => <PropRow key={i} p={p} />)}
          </div>
        </div>
      </div>

      {/* status */}
      <div className="h-[18px] shrink-0 flex items-center justify-end text-[11.500px]">
        <svg width="14" height="14" viewBox="0 0 14 14" className="mr-[3px]">
          <circle cx="7" cy="7" r="7" fill="#2f63b8" />
          <rect x="5.800" y="5.500" width="2.400" height="6" fill="#fff" />
          <circle cx="7" cy="3.500" r="1.400" fill="#fff" />
        </svg>
        <div className="w-[111px] h-[16px] border-l border-[#a0a0a0] text-center leading-[16px]">23:57</div>
        <div className="w-[27px] h-[16px] border-l border-[#a0a0a0] pl-[4px] leading-[16px]">INS</div>
      </div>

      <Dialog />
    </div>
  );
}
